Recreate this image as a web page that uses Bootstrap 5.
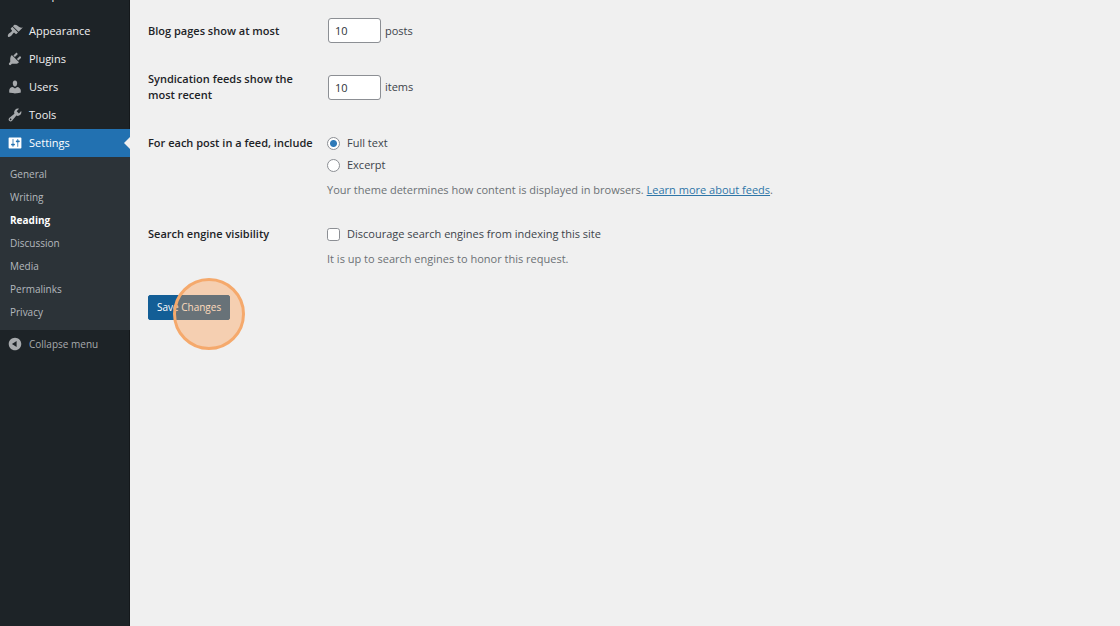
<!DOCTYPE html>
<html lang="en">
<head>
<meta charset="utf-8">
<meta name="viewport" content="width=device-width, initial-scale=1">
<title>Reading Settings</title>
<link href="https://cdn.jsdelivr.net/npm/bootstrap@5.3.0/dist/css/bootstrap.min.css" rel="stylesheet">
<style>
body{font-family:"Open Sans","Noto Sans",sans-serif;font-size:11px;line-height:16px;color:#3c434a;background:#f0f0f0}
.admin-menu{width:130px;background:#1d2327;border-right:1px solid #14181b}
.menu-top{height:28px;padding:0 7px;color:#f0f0f1;font-size:11px;text-decoration:none;column-gap:6px}
.menu-top svg{width:16px;height:16px;fill:#a7aaad;flex:none}
.menu-top.current{background:#2271b1;color:#fff;margin-right:-1px}
.menu-top.current svg{fill:#fff}
.menu-top.current::after{content:"";position:absolute;right:0;top:8px;border:6px solid transparent;border-left-width:0;border-right-color:#f0f0f0}
.menu-scrolled{margin-top:-19px;margin-bottom:8px}
.submenu{background:#2c3338;padding:6px 0;margin-right:-1px}
.submenu a{display:block;height:23px;line-height:23px;padding-left:10px;font-size:10px;color:#b4b9be;text-decoration:none}
.submenu a.active{color:#fff;font-weight:700}
.menu-top.collapse-link{color:#a7aaad;font-size:10px}
.settings-form{padding:18px}
.setting{display:grid;grid-template-columns:168px 1fr;column-gap:11px;margin-bottom:28px}
.setting-name{font-weight:600;color:#1d2327}
.small-number{width:53px;height:25px;margin-left:1px;padding:0 6px;font-size:11px;border:1px solid #8c8f94;border-radius:3px;color:#2c3338}
.choice{column-gap:7px;margin-bottom:6px}
.choice .form-check-input{width:13px;height:13px;margin:0;border-color:#8c8f94;background-color:#fff}
.choice .form-check-input:checked[type=radio]{background-image:radial-gradient(circle,#2f7ab8 0 3px,transparent 4px)}
.description{margin:9px 0 0;color:#6c7075}
.description a{color:#2f76a8}
.btn-save{height:25px;padding:0 8px;font-size:10px;line-height:23px;border-radius:2px;background:#135e96;border-color:#135e96;color:#fff}
.click-mark{left:25px;top:-17px;width:72px;height:72px;border:3px solid #f5a96c;background:rgba(255,151,67,.36);pointer-events:none}
</style>
</head>
<body>
<div class="d-flex min-vh-100 overflow-hidden">
<nav class="admin-menu flex-shrink-0" aria-label="Admin">
  <a href="#" class="menu-top menu-scrolled d-flex align-items-center"><svg viewBox="0 0 20 20"><path d="M3 2h14v3H3z"/></svg>Templates</a>
  <a href="#" class="menu-top d-flex align-items-center"><svg viewBox="0 0 20 20"><path d="M14.48 11.06L7.41 3.99l1.5-1.5c.5-.56 2.3-.47 3.51.32 1.21.8 1.43 1.28 2.91 2.1 1.18.64 2.45 1.26 4.45.85zm-.71.71L6.7 4.7 4.93 6.47c-.39.39-.39 1.02 0 1.41l1.06 1.06c.39.39.39 1.03 0 1.42-.6.6-1.43 1.11-2.21 1.69-.35.26-.7.53-1.01.84C1.43 14.23.4 16.08 1.4 17.07c.99 1 2.84-.03 4.18-1.36.31-.31.58-.66.85-1.02.57-.78 1.08-1.61 1.69-2.21.39-.39 1.02-.39 1.41 0l1.06 1.06c.39.39 1.02.39 1.41 0z"/></svg>Appearance</a>
  <a href="#" class="menu-top d-flex align-items-center"><svg viewBox="0 0 20 20"><path d="M13.11 4.36L9.87 7.6 8 5.73l3.24-3.24c.35-.34 1.05-.2 1.56.32.52.51.66 1.21.31 1.55zm-8 1.77l.91-1.12 9.01 9.01-1.19.84c-.71.71-2.63 1.16-3.82 1.16H6.14L4.9 17.26c-.59.59-1.54.59-2.12 0-.59-.58-.59-1.53 0-2.12l1.24-1.24v-3.88c0-1.13.4-3.19 1.09-3.89zm7.26 3.97l3.24-3.24c.34-.35 1.04-.21 1.55.31.52.51.66 1.21.31 1.55l-3.24 3.25z"/></svg>Plugins</a>
  <a href="#" class="menu-top d-flex align-items-center"><svg viewBox="0 0 20 20"><path d="M10 9.25c-2.27 0-2.73-3.44-2.73-3.44C7 4.02 7.82 2 9.97 2c2.16 0 2.98 2.02 2.71 3.81 0 0-.41 3.44-2.68 3.44zm0 2.57L12.72 10c2.39 0 4.52 2.33 4.52 4.53v2.49s-3.65 1.13-7.24 1.13c-3.65 0-7.24-1.13-7.24-1.13v-2.49c0-2.25 1.94-4.48 4.47-4.48z"/></svg>Users</a>
  <a href="#" class="menu-top d-flex align-items-center"><svg viewBox="0 0 20 20"><path d="M16.68 9.77c-1.34 1.34-3.3 1.67-4.95.99l-5.41 6.52c-.99.99-2.59.99-3.58 0s-.99-2.59 0-3.57l6.52-5.42c-.68-1.65-.35-3.61.99-4.95 1.28-1.28 3.12-1.62 4.72-1.06l-2.89 2.89 2.82 2.82 2.86-2.87c.53 1.58.18 3.39-1.08 4.65zM3.81 16.21c.4.39 1.04.39 1.43 0 .4-.4.4-1.04 0-1.43-.39-.4-1.03-.4-1.43 0-.39.39-.39 1.03 0 1.43z"/></svg>Tools</a>
  <a href="#" class="menu-top current position-relative d-flex align-items-center"><svg viewBox="0 0 20 20"><path d="M18 16V4c0-.55-.45-1-1-1H3c-.55 0-1 .45-1 1v12c0 .55.45 1 1 1h14c.55 0 1-.45 1-1zM8 11h1c.55 0 1 .45 1 1s-.45 1-1 1H8v1.5c0 .28-.22.5-.5.5s-.5-.22-.5-.5V13H6c-.55 0-1-.45-1-1s.45-1 1-1h1V5.5c0-.28.22-.5.5-.5s.5.22.5.5V11zm5-2h-1c-.55 0-1-.45-1-1s.45-1 1-1h1V5.5c0-.28.22-.5.5-.5s.5.22.5.5V7h1c.55 0 1 .45 1 1s-.45 1-1 1h-1v5.5c0 .28-.22.5-.5.5s-.5-.22-.5-.5V9z"/></svg>Settings</a>
  <div class="submenu">
    <a href="#">General</a>
    <a href="#">Writing</a>
    <a href="#" class="active" aria-current="page">Reading</a>
    <a href="#">Discussion</a>
    <a href="#">Media</a>
    <a href="#">Permalinks</a>
    <a href="#">Privacy</a>
  </div>
  <button type="button" class="menu-top collapse-link btn border-0 rounded-0 d-flex align-items-center"><svg viewBox="0 0 20 20"><path d="M10 2.16c4.33 0 7.84 3.51 7.84 7.84s-3.51 7.84-7.84 7.84S2.16 14.33 2.16 10 5.71 2.16 10 2.16zm2 11.72V6.12L6.18 9.97z"/></svg>Collapse menu</button>
</nav>
<main class="flex-grow-1">
<form class="settings-form">
  <div class="setting align-items-center">
    <label class="setting-name" for="posts">Blog pages show at most</label>
    <div class="d-flex align-items-center gap-1"><input class="small-number form-control" id="posts" type="text" inputmode="numeric" value="10"><span>posts</span></div>
  </div>
  <div class="setting align-items-center">
    <label class="setting-name" for="items">Syndication feeds show the most recent</label>
    <div class="d-flex align-items-center gap-1"><input class="small-number form-control" id="items" type="text" inputmode="numeric" value="10"><span>items</span></div>
  </div>
  <div class="setting pt-1" role="radiogroup" aria-labelledby="feed">
    <div class="setting-name" id="feed">For each post in a feed, include</div>
    <div>
      <div class="choice d-flex align-items-center"><input class="form-check-input" type="radio" name="feed" id="full" checked><label for="full">Full text</label></div>
      <div class="choice d-flex align-items-center"><input class="form-check-input" type="radio" name="feed" id="excerpt"><label for="excerpt">Excerpt</label></div>
      <p class="description">Your theme determines how content is displayed in browsers. <a href="#">Learn more about feeds</a>.</p>
    </div>
  </div>
  <div class="setting">
    <div class="setting-name">Search engine visibility</div>
    <div>
      <div class="choice d-flex align-items-center"><input class="form-check-input" type="checkbox" id="noindex"><label for="noindex">Discourage search engines from indexing this site</label></div>
      <p class="description">It is up to search engines to honor this request.</p>
    </div>
  </div>
  <div class="position-relative d-inline-block">
    <button type="button" class="btn btn-primary btn-save">Save Changes</button>
    <span class="click-mark position-absolute rounded-circle"></span>
  </div>
</form>
</main>
</div>
<script src="https://cdn.jsdelivr.net/npm/bootstrap@5.3.0/dist/js/bootstrap.bundle.min.js"></script>
</body>
</html>
